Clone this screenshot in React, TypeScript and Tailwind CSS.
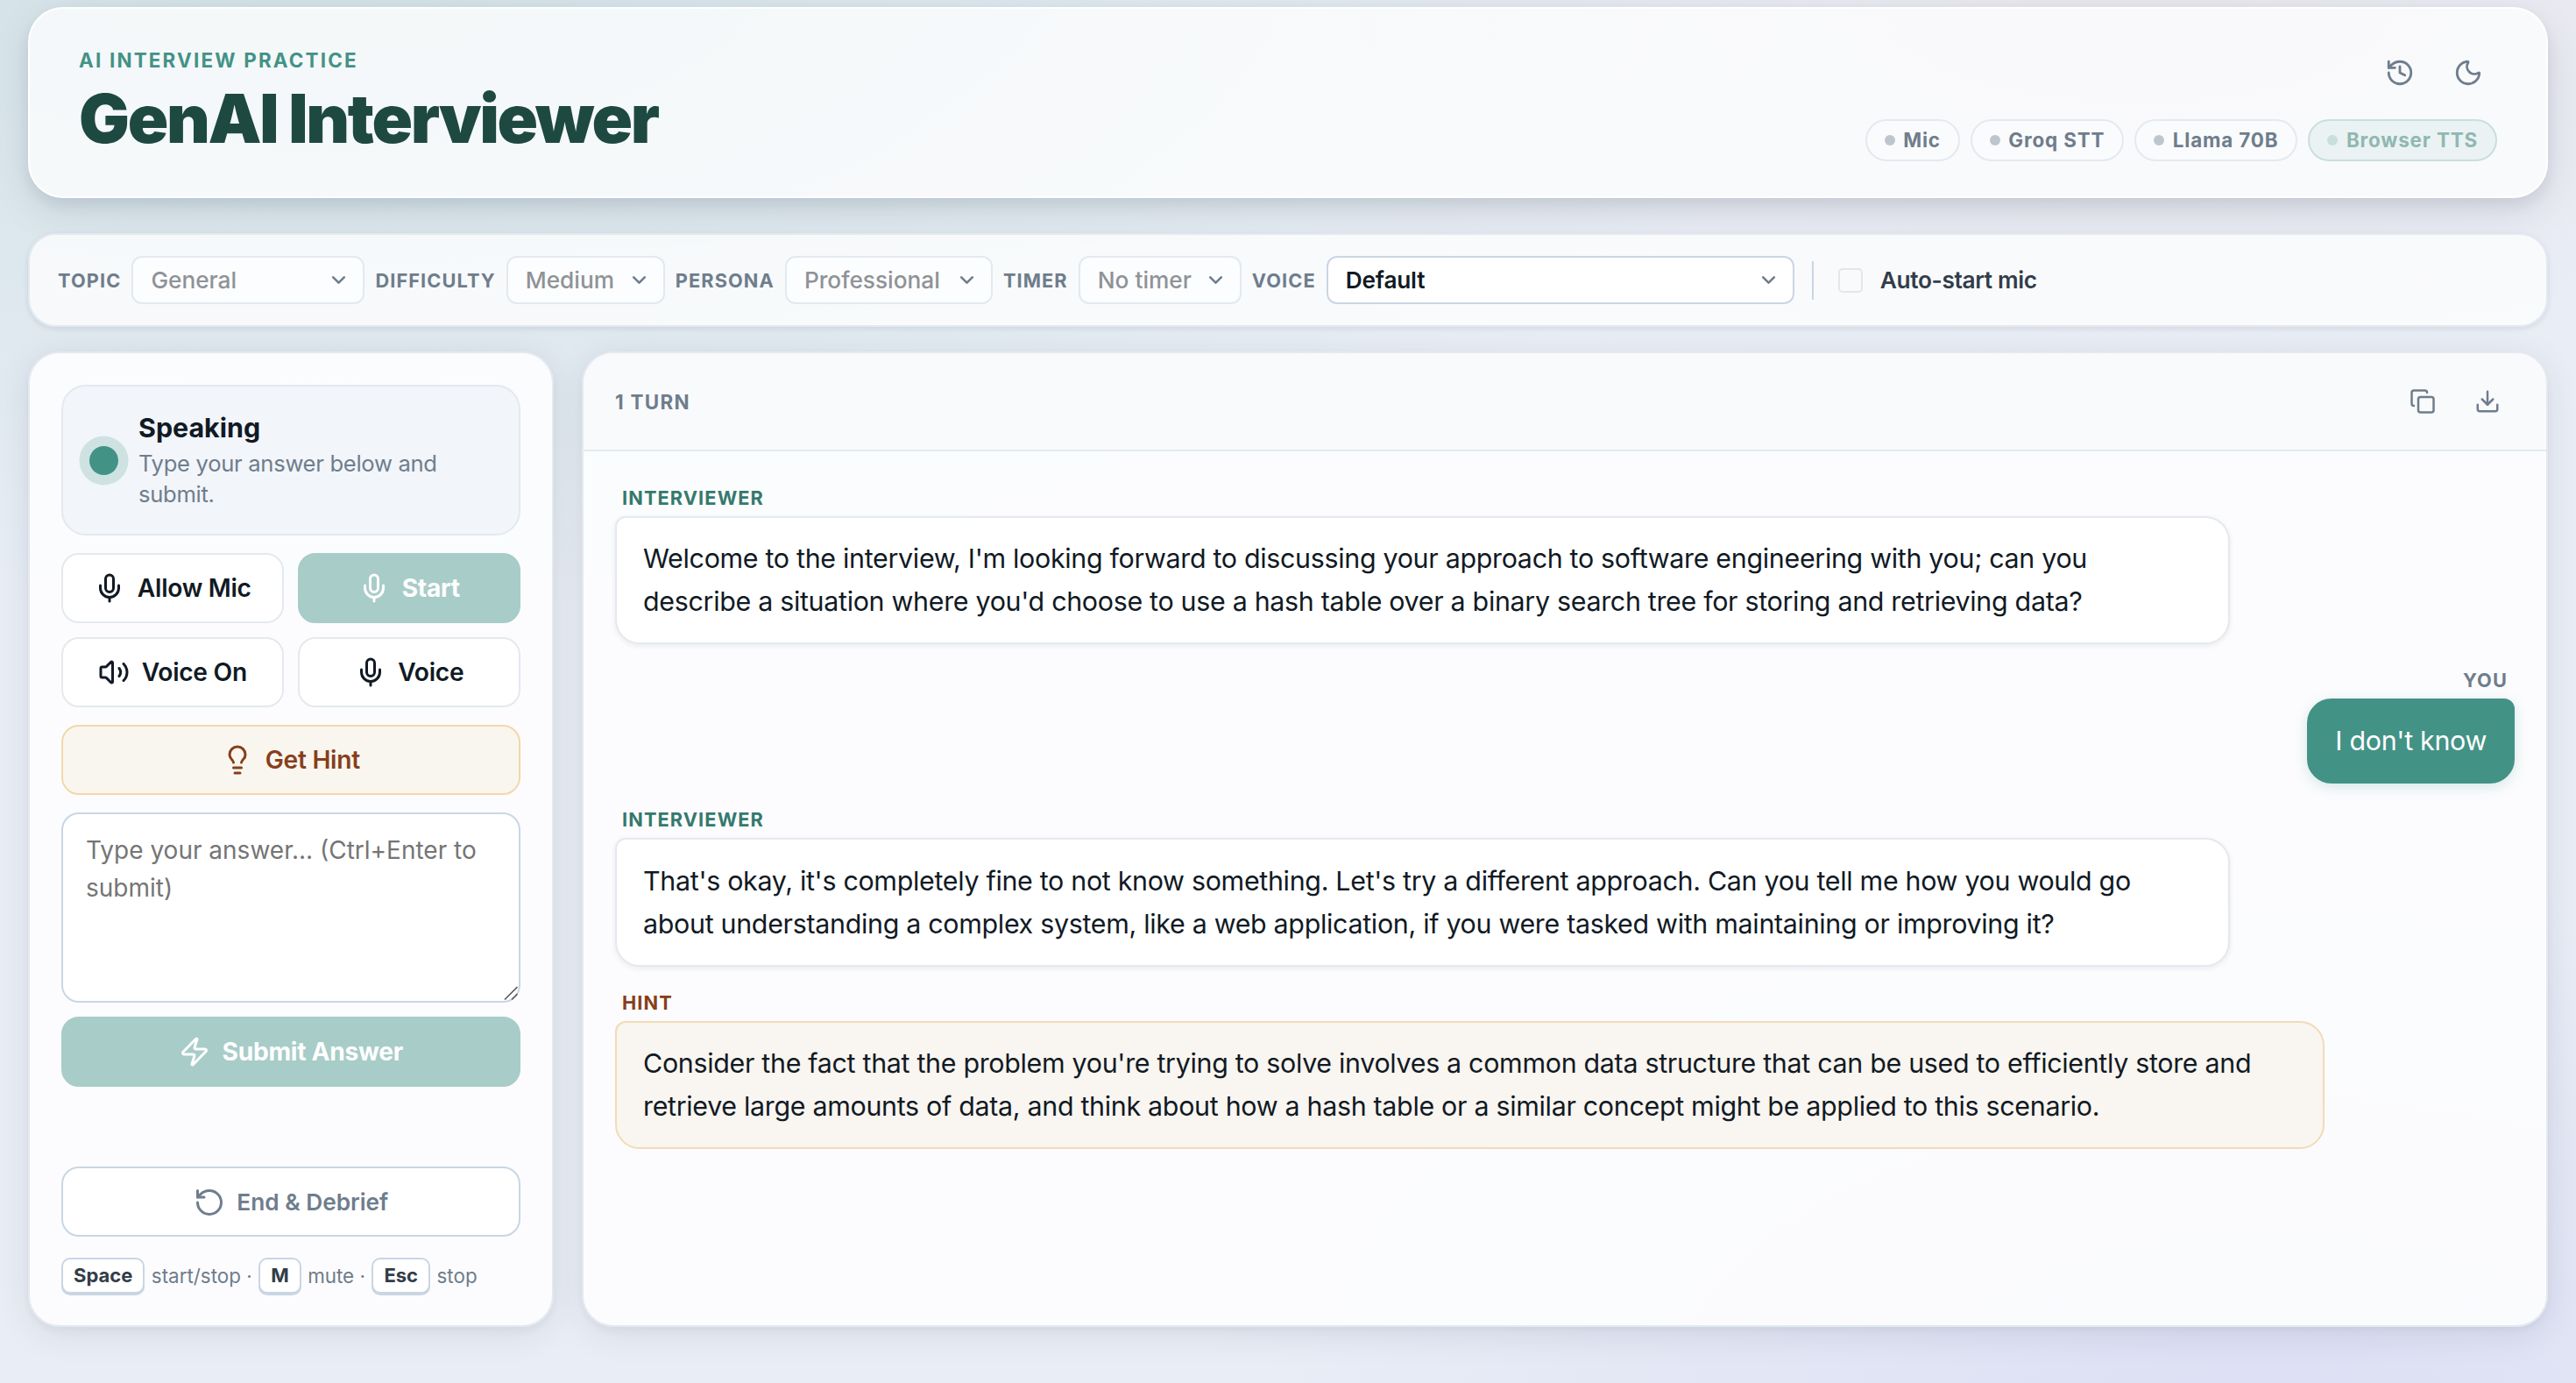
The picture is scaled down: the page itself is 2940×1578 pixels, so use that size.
import type { ReactNode } from "react";
import {
  Copy,
  Download,
  History,
  Lightbulb,
  Mic,
  Moon,
  RotateCcw,
  Volume2,
  Zap,
} from "lucide-react";

function StatusPill({ label, active = false }: { label: string; active?: boolean }) {
  return (
    <span
      className={
        active
          ? "flex h-12 items-center gap-[9.5px] rounded-full border-2 border-[#c9dfdd] bg-[#ebf2f3] px-5 text-[22.4px] font-bold tracking-[0.85px] text-[#8fb8b1]"
          : "flex h-12 items-center gap-[9.5px] rounded-full border-2 border-[#e4e9f0] bg-[#fafbfd] px-5 text-[22.4px] font-bold tracking-[0.85px] text-[#6f7d8c]"
      }
    >
      <span className={active ? "size-3 rounded-full bg-[#c8dfdb]" : "size-3 rounded-full bg-[#bfc5ce]"} />
      {label}
    </span>
  );
}

function ToolbarLabel({ children }: { children: ReactNode }) {
  return (
    <span className="shrink-0 pt-px text-[21.76px] font-bold tracking-[1.1px] text-[#6f7d8c]">
      {children}
    </span>
  );
}

function Select({
  value,
  width,
  enabled = false,
}: {
  value: string;
  width: string;
  enabled?: boolean;
}) {
  return (
    <div
      className={`${width} ${
        enabled
          ? "border-[#c9d6e4] bg-white font-semibold tracking-[-0.2px] text-[#111a24]"
          : "border-[#e2e9f0] bg-[#fcfdfe] font-medium text-[#8f9297]"
      } flex h-[55px] shrink-0 items-center justify-between rounded-xl border-2 pr-[18px] pl-[20px] text-[26.24px]`}
    >
      <span className="pt-px">{value}</span>
      <svg
        className="size-[19px] text-[#6f7d8c]"
        viewBox="0 0 19 19"
        fill="none"
        stroke="currentColor"
        strokeWidth="2.6"
        strokeLinecap="round"
        strokeLinejoin="round"
      >
        <path d="M3.2 6.4l6.3 6.3 6.3-6.3" />
      </svg>
    </div>
  );
}

function ActionButton({
  icon,
  label,
  variant = "plain",
}: {
  icon: ReactNode;
  label: string;
  variant?: "plain" | "primary" | "hint" | "muted";
}) {
  const look = {
    plain: "border-[#e4e9f0] bg-white text-[#111a24] font-semibold text-[28.16px] tracking-[-0.01em]",
    primary: "border-[#a8ccc8] bg-[#a8ccc8] text-white font-bold text-[28.16px] tracking-[-0.01em]",
    hint: "border-[#f4d7ab] bg-[#f9f6f0] text-[#873f1a] font-semibold text-[28.16px] tracking-[-0.01em]",
    muted: "border-[#c9d6e4] bg-white text-[#6f7d8c] font-semibold text-[26.24px] pt-px",
  }[variant];
  return (
    <button
      type="button"
      className={`${look} flex h-20 w-full items-center justify-center gap-[13.6px] rounded-[20px] border-2`}
    >
      {icon}
      {label}
    </button>
  );
}

function Message({
  author,
  children,
  kind,
}: {
  author: string;
  children: ReactNode;
  kind: "interviewer" | "you" | "hint";
}) {
  const label = {
    interviewer: "text-[#35796d]",
    you: "self-end text-[#6f7d8c]",
    hint: "text-[#873f1a]",
  }[kind];
  const bubble = {
    interviewer:
      "w-[85%] rounded-[28px] rounded-tl-[12px] border-[#e4e9f0] bg-white text-[#111a24] shadow-[0_2px_6px_rgba(15,23,42,0.08)]",
    you: "self-end rounded-[28px] rounded-tr-[12px] border-[#439286] bg-[#439286] text-white shadow-[0_4px_16px_rgba(67,146,134,0.2)]",
    hint: "w-[90%] rounded-[28px] rounded-tl-[12px] border-[#f2dbb6] bg-[#f9f5f0] text-[#111a24]",
  }[kind];
  return (
    <div className="flex flex-col gap-2">
      <span className={`${label} px-2 text-[21.76px] leading-[26px] font-bold tracking-[1.1px]`}>
        {author}
      </span>
      <div
        className={`${bubble} border-2 px-[30px] py-[22.4px] text-[30.4px] leading-[48.64px] tracking-[-0.01em]`}
      >
        {children}
      </div>
    </div>
  );
}

function Key({ children }: { children: ReactNode }) {
  return (
    <kbd className="flex h-[41px] items-center rounded-[10px] border-2 border-[#c9d6e4] bg-white px-3 font-['Inter',sans-serif] text-[22px] font-bold text-[#323d49] shadow-[0_2px_0_#c9d6e4]">
      {children}
    </kbd>
  );
}

const panelShadow = "shadow-[0_4px_8px_rgba(15,23,42,0.04),0_8px_40px_rgba(15,23,42,0.09)]";

export default function App() {
  return (
    <div className="flex h-[1578px] w-full flex-col overflow-hidden bg-[#e9eef6] bg-[radial-gradient(ellipse_60%_50%_at_12%_-5%,rgba(67,146,134,0.15),transparent),radial-gradient(ellipse_40%_30%_at_83%_0%,rgba(214,150,150,0.09),transparent),radial-gradient(ellipse_42%_42%_at_88%_103%,rgba(135,120,228,0.13),transparent)] px-8 pt-2 font-['Inter',sans-serif] text-[#111a24]">
      <header className="flex h-[218px] shrink-0 items-center justify-between rounded-[40px] border-2 border-white/90 bg-white/75 px-14 shadow-[0_8px_16px_rgba(15,23,42,0.08),0_16px_48px_rgba(15,23,42,0.09)]">
        <div className="flex flex-col pb-[3px]">
          <span className="text-[22.4px] leading-[30px] font-bold tracking-[2.2px] text-[#439286]">
            AI INTERVIEW PRACTICE
          </span>
          <h1 className="mt-[10px] -mb-px text-[76.8px] leading-[84px] font-black tracking-[-0.03em] text-[#1e4941]">
            GenAI Interviewer
          </h1>
        </div>
        <div className="flex flex-col items-end gap-5">
          <div className="flex gap-3 text-[#6f7d8c]">
            <button type="button" className="grid size-[66px] place-items-center">
              <History size={34} />
            </button>
            <button type="button" className="grid size-[66px] place-items-center">
              <Moon size={34} />
            </button>
          </div>
          <div className="flex gap-3">
            <StatusPill label="Mic" />
            <StatusPill label="Groq STT" />
            <StatusPill label="Llama 70B" />
            <StatusPill label="Browser TTS" active />
          </div>
        </div>
      </header>

      <section className="mt-10 flex h-[107px] shrink-0 items-center gap-3 rounded-[32px] border-2 border-[#e3e9ef] bg-white/75 px-8 shadow-[0_2px_6px_rgba(15,23,42,0.1)]">
        <ToolbarLabel>TOPIC</ToolbarLabel>
        <Select value="General" width="w-[266px]" />
        <ToolbarLabel>DIFFICULTY</ToolbarLabel>
        <Select value="Medium" width="w-[181px]" />
        <ToolbarLabel>PERSONA</ToolbarLabel>
        <Select value="Professional" width="w-[237px]" />
        <ToolbarLabel>TIMER</ToolbarLabel>
        <Select value="No timer" width="w-[186px]" />
        <ToolbarLabel>VOICE</ToolbarLabel>
        <Select value="Default" width="w-[534px]" enabled />
        <span className="mx-2 h-11 w-0.5 shrink-0 bg-[#c9d6e4]" />
        <label className="ml-2 flex items-center gap-5 text-[26.24px] font-semibold tracking-[-0.35px] text-[#323d49]">
          <span className="size-7 rounded-[5px] border-2 border-[#e4e6ea]" />
          Auto-start mic
        </label>
      </section>

      <main className="mt-7 flex h-[1113px] shrink-0 gap-8">
        <aside
          className={`${panelShadow} flex w-[600px] shrink-0 flex-col rounded-[36px] border-2 border-[#e4e9ef] bg-white/85 p-9`}
        >
          <div className="flex h-[172px] shrink-0 items-center gap-[26px] rounded-[28px] border-2 border-[#e4e9f0] bg-[#f2f5fa] px-8">
            <span className="-mx-[2.5px] size-[33px] shrink-0 rounded-full bg-[#439286] shadow-[0_0_0_11.5px_#cee2e1]" />
            <div className="pb-[2px]">
              <div className="text-[30.4px] leading-[40px] font-bold">Speaking</div>
              <p className="mt-[3px] text-[25.6px] leading-[35px] tracking-[-0.3px] text-[#6f7d8c]">
                Type your answer below and submit.
              </p>
            </div>
          </div>

          <div className="mt-5 grid grid-cols-2 gap-4">
            <ActionButton icon={<Mic size={36} />} label="Allow Mic" />
            <ActionButton icon={<Mic size={36} />} label="Start" variant="primary" />
            <ActionButton icon={<Volume2 size={36} />} label="Voice On" />
            <ActionButton icon={<Mic size={36} />} label="Voice" />
          </div>

          <div className="mt-5">
            <ActionButton icon={<Lightbulb size={36} />} label="Get Hint" variant="hint" />
          </div>

          <div className="relative mt-5">
            <textarea
              className="block h-[217px] w-full resize-none rounded-[20px] border-2 border-[#c9d6e4] bg-white px-[26px] py-[20px] text-[28px] leading-[43.2px] outline-none placeholder:text-[#757575]"
              placeholder="Type your answer... (Ctrl+Enter to submit)"
            />
            <svg
              className="absolute right-[3px] bottom-[3px] size-4"
              viewBox="0 0 16 16"
              stroke="#5c5c5c"
              strokeWidth="1.6"
            >
              <path d="M1 15.5L15.5 1M9 15.5l6.5-6.5" />
            </svg>
          </div>

          <div className="mt-4">
            <ActionButton icon={<Zap size={36} />} label="Submit Answer" variant="primary" />
          </div>

          <div className="mt-auto">
            <ActionButton icon={<RotateCcw size={36} />} label="End & Debrief" variant="muted" />
          </div>

          <div className="mt-6 flex h-[41px] items-center gap-[7.5px] text-[22.4px] text-[#6f7d8c]">
            <Key>Space</Key>
            <span>start/stop ·</span>
            <Key>M</Key>
            <span>mute ·</span>
            <Key>Esc</Key>
            <span>stop</span>
          </div>
        </aside>

        <section
          className={`${panelShadow} flex min-w-0 flex-1 flex-col overflow-hidden rounded-[36px] border-2 border-[#e4e9ef] bg-white/85`}
        >
          <div className="flex h-[112px] shrink-0 items-center justify-between border-b-2 border-[#e3e9ef] bg-[#f8fafb]/70 px-9">
            <span className="pt-0.5 text-[22.4px] font-bold tracking-[1.3px] text-[#6f7d8c]">1 TURN</span>
            <div className="flex gap-3 text-[#6f7d8c]">
              <button type="button" className="grid size-[62px] place-items-center">
                <Copy size={30} />
              </button>
              <button type="button" className="grid size-[62px] place-items-center">
                <Download size={30} />
              </button>
            </div>
          </div>
          <div className="flex flex-1 flex-col gap-7 px-9 pt-10">
            <Message author="INTERVIEWER" kind="interviewer">
              Welcome to the interview, I'm looking forward to discussing your approach to software
              engineering with you; can you describe a situation where you'd choose to use a hash
              table over a binary search tree for storing and retrieving data?
            </Message>
            <Message author="YOU" kind="you">
              I don't know
            </Message>
            <Message author="INTERVIEWER" kind="interviewer">
              That's okay, it's completely fine to not know something. Let's try a different
              approach. Can you tell me how you would go about understanding a complex system, like
              a web application, if you were tasked with maintaining or improving it?
            </Message>
            <Message author="HINT" kind="hint">
              Consider the fact that the problem you're trying to solve involves a common data
              structure that can be used to efficiently store and retrieve large amounts of data,
              and think about how a hash table or a similar concept might be applied to this
              scenario.
            </Message>
          </div>
        </section>
      </main>
    </div>
  );
}
